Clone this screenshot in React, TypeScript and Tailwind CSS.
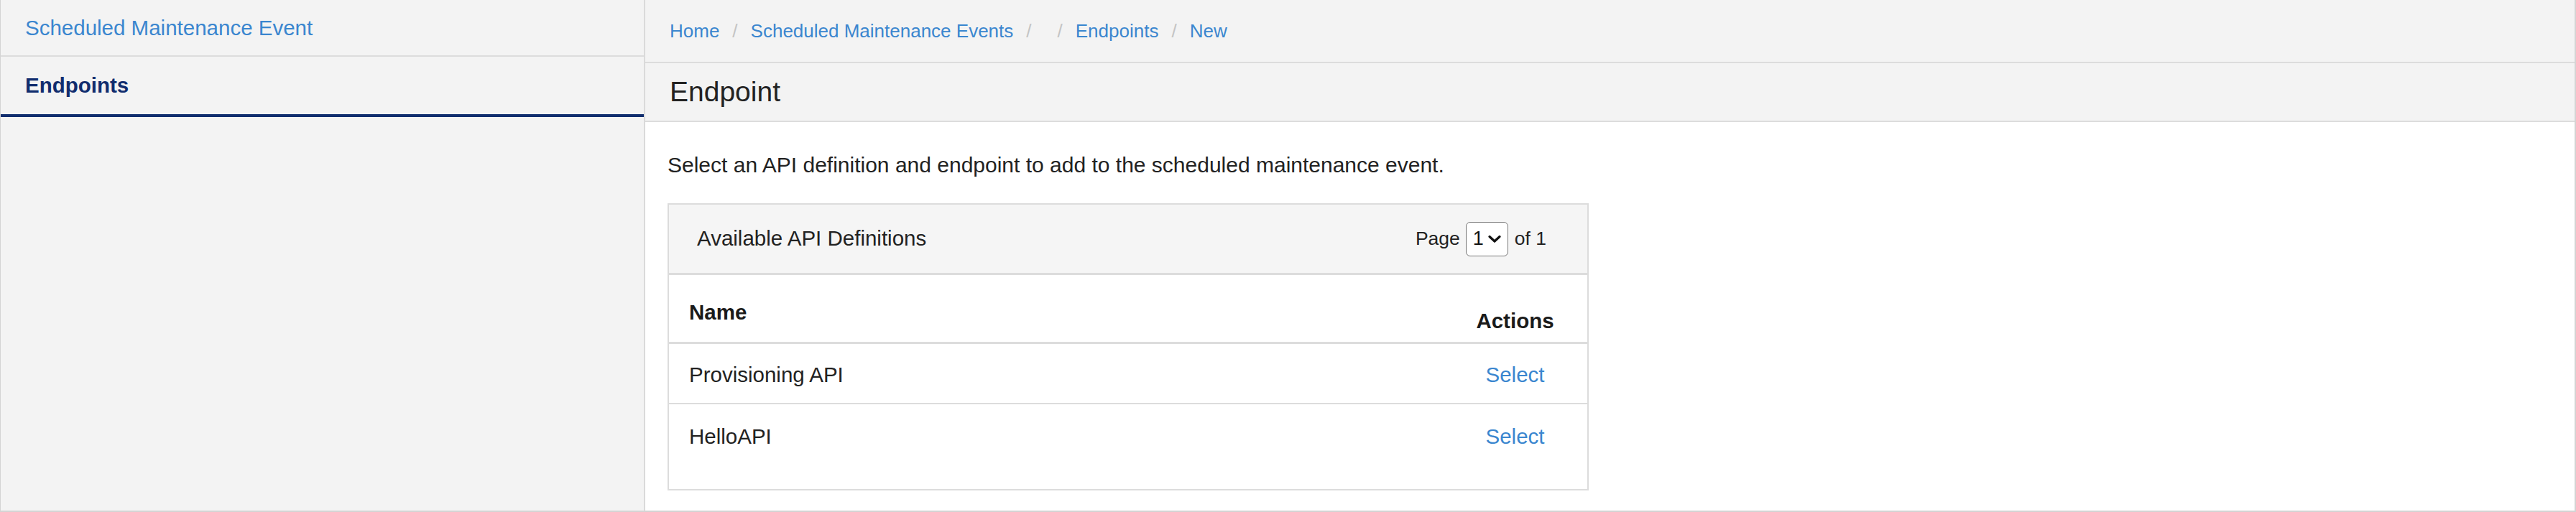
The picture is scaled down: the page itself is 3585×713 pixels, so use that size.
import React from "react";

const Chevron = () => (
  <svg width="18" height="12" viewBox="0 0 18 12" className="ml-[6px]">
    <path d="M2 2.5 L9 9 L16 2.5" fill="none" stroke="#111" strokeWidth="3.2" strokeLinecap="round" strokeLinejoin="round" />
  </svg>
);

const Slash = () => <span className="text-[#c4c4c4]">/</span>;

export default function App() {
  return (
    <div className="flex h-[713px] w-full border-l border-r-2 border-b-2 border-[#d4d4d4] font-['Liberation_Sans',Arial,sans-serif] text-[#222]">
      <aside className="w-[897px] shrink-0 bg-[#f3f3f3] border-r-2 border-[#dadada]">
        <div className="h-[79px] flex items-center pl-[34px] pt-[2px] border-b-2 border-[#dcdcdc] text-[29.5px] text-[#3a86cf]">
          Scheduled Maintenance Event
        </div>
        <div className="h-[84px] flex items-center pl-[34px] border-b-4 border-[#112d6e] text-[29.5px] font-bold text-[#112d6e]">
          Endpoints
        </div>
      </aside>
      <main className="flex-1 flex flex-col bg-white">
        <nav className="h-[88px] shrink-0 flex items-center gap-[18px] pl-[34px] bg-[#f3f3f3] border-b-2 border-[#dcdcdc] text-[26px] text-[#3a86cf]">
          <span>Home</span>
          <Slash />
          <span>Scheduled Maintenance Events</span>
          <Slash />
          <span></span>
          <Slash />
          <span>Endpoints</span>
          <Slash />
          <span>New</span>
        </nav>
        <div className="h-[82px] shrink-0 flex items-center pl-[34px] bg-[#f3f3f3] border-b-2 border-[#dcdcdc] text-[39px] text-[#222]">
          Endpoint
        </div>
        <div className="pt-[37px] pl-[31px]">
          <p className="text-[30px] leading-[45px]">
            Select an API definition and endpoint to add to the scheduled maintenance event.
          </p>
          <div className="mt-[31px] w-[1282px] border-2 border-[#dcdcdc]">
            <div className="h-[98px] flex items-center justify-between pl-[39px] pr-[57px] bg-[#f5f5f5] border-b-[3px] border-[#dcdcdc]">
              <span className="text-[29.5px]">Available API Definitions</span>
              <div className="flex items-center text-[26.5px]">
                <span>Page</span>
                <div className="ml-[8px] w-[59px] h-[48px] flex items-center justify-center border-[1.5px] border-[#777] rounded-[6px] bg-white text-[27px] text-[#111]">
                  <span>1</span>
                  <Chevron />
                </div>
                <span className="ml-[9px]">of 1</span>
              </div>
            </div>
            <div className="pb-[34px]">
              <div className="h-[96px] flex border-b-[3px] border-[#dcdcdc] font-bold text-[29.5px] leading-[41px] text-[#1a1a1a]">
                <div className="flex-1 pl-[28px] pt-[31px]">Name</div>
                <div className="w-[201px] text-center self-end pb-[9px]">Actions</div>
              </div>
              <div className="h-[84px] flex items-center pt-[5px] border-b-2 border-[#dcdcdc] text-[29.5px]">
                <div className="flex-1 pl-[28px]">Provisioning API</div>
                <div className="w-[201px] text-center text-[#3a86cf]">Select</div>
              </div>
              <div className="h-[84px] flex items-center pt-[6px] text-[29.5px]">
                <div className="flex-1 pl-[28px]">HelloAPI</div>
                <div className="w-[201px] text-center text-[#3a86cf]">Select</div>
              </div>
            </div>
          </div>
        </div>
      </main>
    </div>
  );
}
